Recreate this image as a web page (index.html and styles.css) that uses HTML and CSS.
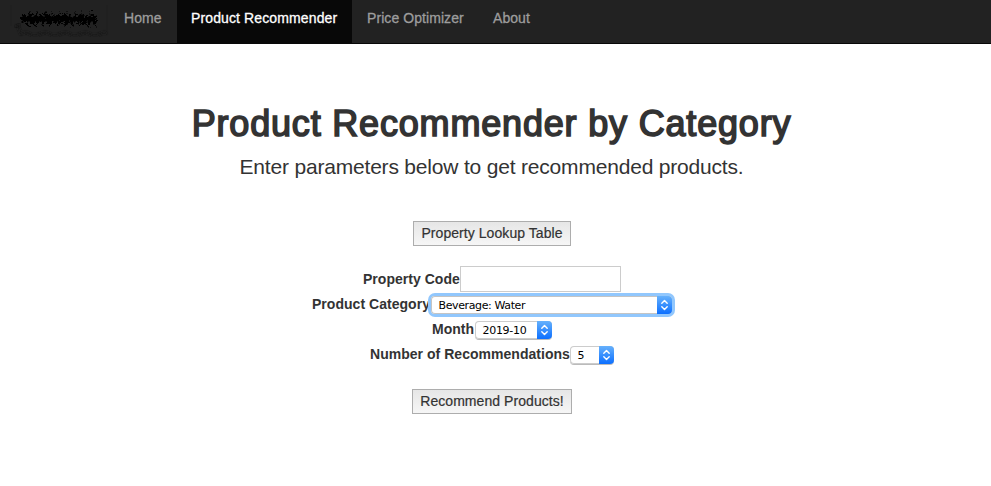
FILE: index.html
```html
<!DOCTYPE html>
<html lang="en">
<head>
<meta charset="utf-8">
<title>Product Recommender</title>
<link rel="stylesheet" href="styles.css">
</head>
<body>
<nav class="navbar">
  <div class="brand">
    <svg width="109" height="40" viewBox="0 0 109 40" aria-hidden="true">
      <defs>
        <filter id="soft"><feGaussianBlur stdDeviation=".9"/></filter>
        <filter id="rough" x="-10%" y="-100%" width="120%" height="300%"><feTurbulence type="fractalNoise" baseFrequency=".5" numOctaves="2" seed="4"/><feDisplacementMap in="SourceGraphic" scale="8" xChannelSelector="R" yChannelSelector="G"/><feGaussianBlur stdDeviation=".55"/></filter>
      </defs>
      <path d="M18 26l3 8q5-3 9 0t10 0 10 0 10 0 10 0 10 0 10 0 10 0 6 0" fill="none" stroke="#1a1a1a" stroke-width="2" filter="url(#soft)"/>
      <path d="M11 5v21M107 5v26" fill="none" stroke="#1e1e1e" stroke-width="1"/>
      <path d="M15 27l5-3" stroke="#111" stroke-width="2" filter="url(#soft)"/>
      <g filter="url(#rough)" fill="none" stroke="#020202">
        <path d="M21 19h76" stroke-width="5"/>
        <path d="M23 15.5h72M25 22.5h71" stroke-width="3" stroke-dasharray="3 2 5 2 2 3"/>
        <path d="M29 12.5h66M27 25.5h69" stroke-width="1.8" stroke-dasharray="2 5 2 6"/>
      </g>
    </svg>
  </div>
  <a class="nav-link home"><span>Home</span></a>
  <a class="nav-link active"><span>Product Recommender</span></a>
  <a class="nav-link optimizer"><span>Price Optimizer</span></a>
  <a class="nav-link about"><span>About</span></a>
</nav>
<main class="content">
  <h1>Product Recommender by Category</h1>
  <p class="lead">Enter parameters below to get recommended products.</p>
  <button class="button lookup">Property Lookup Table</button>
  <form class="fields">
    <div class="field"><label class="l-code">Property Code</label><input class="code" type="text" aria-label="Property Code"></div>
    <div class="field"><label class="l-category">Product Category</label><div class="select category focused"><span>Beverage: Water</span><i class="arrows"><svg width="15" height="18" viewBox="0 0 15 18"><path d="M4.8 7.2l2.7-2.7 2.7 2.7M4.8 10.8l2.7 2.7 2.7-2.7"/></svg></i></div></div>
    <div class="field"><label class="l-month">Month</label><div class="select month"><span>2019-10</span><i class="arrows"><svg width="15" height="18" viewBox="0 0 15 18"><path d="M4.8 7.2l2.7-2.7 2.7 2.7M4.8 10.8l2.7 2.7 2.7-2.7"/></svg></i></div></div>
    <div class="field"><label class="l-count">Number of Recommendations</label><div class="select count"><span>5</span><i class="arrows"><svg width="15" height="18" viewBox="0 0 15 18"><path d="M4.8 7.2l2.7-2.7 2.7 2.7M4.8 10.8l2.7 2.7 2.7-2.7"/></svg></i></div></div>
  </form>
  <button class="button recommend">Recommend Products!</button>
</main>
</body>
</html>
```
FILE: styles.css
```css
* { box-sizing: border-box; }
body {
  margin: 0;
  background: #fff;
  color: #333;
  font: 14px/20px "Liberation Sans", Arial, sans-serif;
  white-space: nowrap;
}
.navbar {
  display: flex;
  height: 44px;
  background: #222;
  border-bottom: 1px solid #080808;
}
.brand { width: 109px; height: 40px; }
.brand svg { display: block; }
.nav-link {
  height: 43px;
  padding: 8px 0 0 15px;
  color: #9d9d9d;
  letter-spacing: .07px;
  -webkit-text-stroke: .3px;
}
.home { width: 68px; }
.active { width: 175px; padding-left: 14px; background: #080808; color: #fff; letter-spacing: .12px; }
.optimizer { width: 126px; }
.content {
  display: flex;
  flex-direction: column;
  align-items: center;
  width: 983px;
  padding-top: 60px;
}
h1 {
  margin: 0;
  font-size: 36px;
  font-weight: 400;
  line-height: 40px;
  letter-spacing: .82px;
  -webkit-text-stroke: 1.6px #333;
}
.lead {
  margin: 8px 0 0;
  font-size: 21px;
  line-height: 30px;
  letter-spacing: -.19px;
}
.button {
  display: block;
  height: 25px;
  padding: 0;
  border: 1px solid #adadad;
  border-radius: 0;
  background: linear-gradient(#e6e6e6, #f6f6f6);
  color: #333;
  font: 14px/21px "Liberation Sans", Arial, sans-serif;
  letter-spacing: .06px;
  -webkit-text-stroke: .2px;
}
.lookup { width: 158px; margin: 39px 0 0 1px; }
.recommend { width: 160px; margin: 23px 0 0 1px; }
.fields { margin: 20px 0 0 1px; }
.field {
  display: flex;
  justify-content: center;
  align-items: flex-start;
  height: 25px;
}
label { padding-top: 3px; font-weight: 700; letter-spacing: .03px; }
.l-code { width: 97px; }
.l-category { width: 119px; }
.l-month { width: 43px; }
.l-count { width: 200px; }
.code {
  width: 161px;
  height: 26px;
  margin: 0;
  padding: 0 4px;
  border: 1px solid #ccc;
  background: #fff;
}
.select {
  display: flex;
  justify-content: space-between;
  height: 18px;
  margin-top: 5px;
  padding-left: 7.5px;
  border-radius: 4px;
  background: #fff;
  box-shadow: inset 0 0 0 1px #ccc, 0 1px 0 #bbb;
  color: #000;
  font: 11px/19px "DejaVu Sans", "Liberation Sans", sans-serif;
  letter-spacing: -.38px;
}
.select.focused { box-shadow: inset 0 0 0 1px #c4c4c4, 0 0 0 3px #91c7fd; }
.category { width: 241px; }
.month { width: 77px; letter-spacing: -.3px; }
.count { width: 44px; }
.arrows {
  width: 15px;
  height: 18px;
  border-radius: 0 4px 4px 0;
  background: linear-gradient(#66b1fc, #0c6fff);
}
.arrows svg { display: block; }
.arrows path {
  fill: none;
  stroke: #fff;
  stroke-width: 1.4;
  stroke-linecap: round;
  stroke-linejoin: round;
}
```
